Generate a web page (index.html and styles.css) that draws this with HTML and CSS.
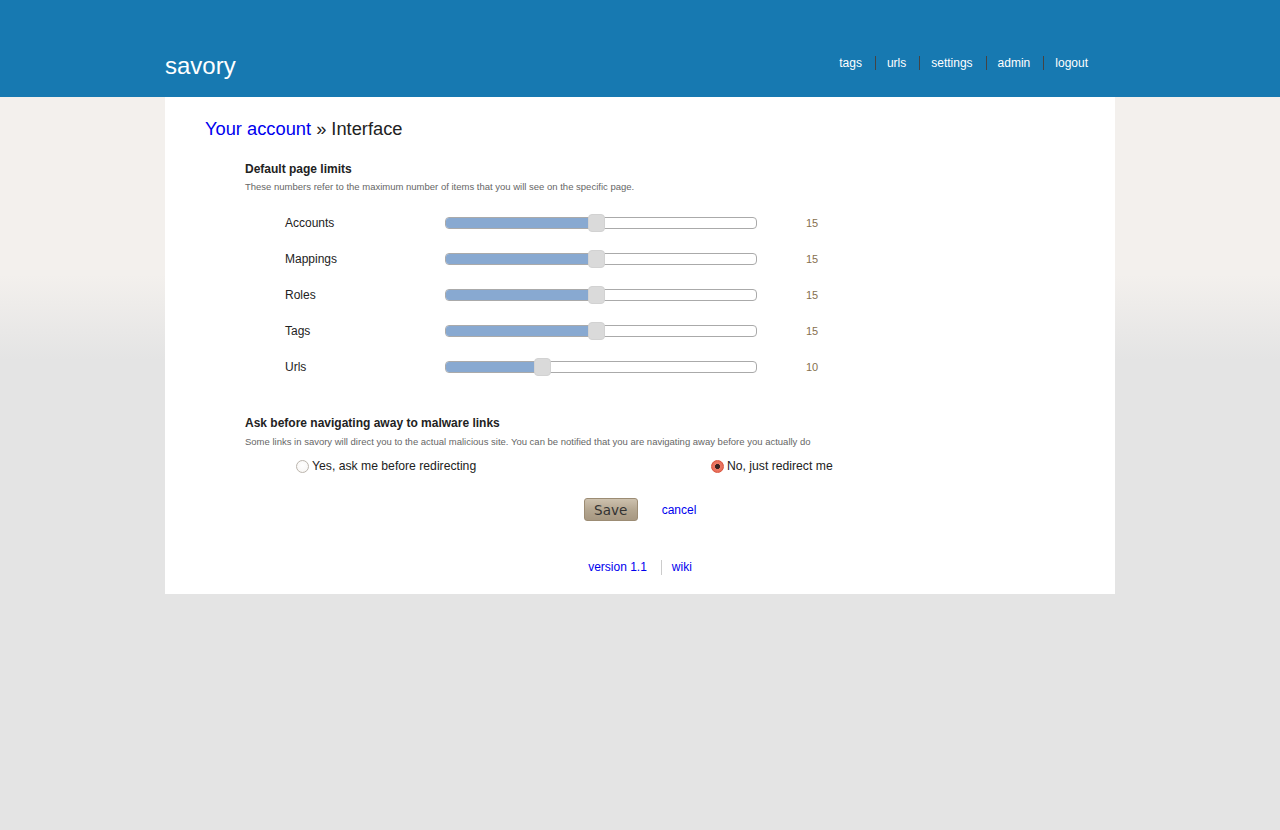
FILE: index.html
```html
<!DOCTYPE html>
<html>
<head>
<meta charset="utf-8">
<title>savory - Interface</title>
<link rel="stylesheet" href="styles.css">
</head>
<body>
<header class="topbar">
  <div class="topbar-inner">
    <div class="logo">savory</div>
    <nav class="nav">
      <a href="#">tags</a>
      <a href="#">urls</a>
      <a href="#">settings</a>
      <a href="#">admin</a>
      <a href="#">logout</a>
    </nav>
  </div>
</header>
<main class="page">
  <h1 class="title"><a href="#">Your account</a> » Interface</h1>

  <section class="section">
    <h2 class="sec-head">Default page limits</h2>
    <p class="sec-desc">These numbers refer to the maximum number of items that you will see on the specific page.</p>
    <div class="rows">
      <div class="row">
        <span class="row-label">Accounts</span>
        <div class="slider"><div class="fill" style="width:48.28%"></div><div class="thumb" style="left:48.28%"></div></div>
        <span class="row-value">15</span>
      </div>
      <div class="row">
        <span class="row-label">Mappings</span>
        <div class="slider"><div class="fill" style="width:48.28%"></div><div class="thumb" style="left:48.28%"></div></div>
        <span class="row-value">15</span>
      </div>
      <div class="row">
        <span class="row-label">Roles</span>
        <div class="slider"><div class="fill" style="width:48.28%"></div><div class="thumb" style="left:48.28%"></div></div>
        <span class="row-value">15</span>
      </div>
      <div class="row">
        <span class="row-label">Tags</span>
        <div class="slider"><div class="fill" style="width:48.28%"></div><div class="thumb" style="left:48.28%"></div></div>
        <span class="row-value">15</span>
      </div>
      <div class="row">
        <span class="row-label">Urls</span>
        <div class="slider"><div class="fill" style="width:31.03%"></div><div class="thumb" style="left:31.03%"></div></div>
        <span class="row-value">10</span>
      </div>
    </div>
  </section>

  <section class="section section-malware">
    <h2 class="sec-head">Ask before navigating away to malware links</h2>
    <p class="sec-desc">Some links in savory will direct you to the actual malicious site. You can be notified that you are navigating away before you actually do</p>
    <div class="radios">
      <label class="radio"><span class="dot"></span>Yes, ask me before redirecting</label>
      <label class="radio"><span class="dot checked"></span>No, just redirect me</label>
    </div>
  </section>

  <div class="actions">
    <button class="save" type="button">Save</button>
    <a href="#" class="cancel">cancel</a>
  </div>

  <footer class="footer">
    <a href="#">version 1.1</a><a href="#" class="wiki">wiki</a>
  </footer>
</main>
</body>
</html>
```
FILE: styles.css
```css
html {
  background: #e4e4e4;
}
body {
  margin: 0;
  min-height: 830px;
  font-family: "Liberation Sans", Arial, sans-serif;
  color: #222;
  background: linear-gradient(to bottom, #f3f0ed 0px, #f3f0ed 275px, #e4e4e4 360px, #e4e4e4 100%);
}
a {
  color: #0000ee;
  text-decoration: none;
}
.topbar {
  background: #1779b1;
  height: 97px;
}
.topbar-inner {
  width: 950px;
  margin: 0 auto;
  display: flex;
  justify-content: space-between;
  align-items: flex-start;
}
.logo {
  margin-top: 52px;
  font-size: 24px;
  line-height: 28px;
  color: #fff;
}
.nav {
  margin-top: 56px;
  margin-right: 14px;
  display: flex;
}
.nav a {
  color: #fff;
  font-size: 12px;
  line-height: 14px;
  padding: 0 13px 0 11px;
  border-left: 1px solid #444;
}
.nav a:first-child {
  border-left: none;
}
.page {
  width: 950px;
  margin: 0 auto;
  background: #fff;
  box-sizing: border-box;
  padding: 21px 40px 19px;
}
.title {
  margin: 0;
  font-size: 18.3px;
  line-height: 22px;
  font-weight: normal;
  color: #222;
}
.section {
  margin: 22px 0 0 40px;
}
.section-malware {
  margin-top: 31px;
}
.section-malware .sec-desc {
  margin-top: 6px;
}
.sec-head {
  margin: 0 0 5px;
  font-size: 12px;
  line-height: 14px;
  font-weight: bold;
  color: #222;
}
.sec-desc {
  margin: 0;
  font-size: 9.5px;
  line-height: 12px;
  color: #666;
}
.rows {
  margin: 12px 0 0 40px;
}
.row {
  display: flex;
  align-items: center;
  height: 36px;
}
.row-label {
  width: 160px;
  font-size: 12px;
}
.slider {
  position: relative;
  width: 312px;
  height: 12px;
  box-sizing: border-box;
  border: 1px solid #aaa;
  border-radius: 4px;
  background: #fff;
}
.fill {
  height: 100%;
  background: #88a9d1;
  border-radius: 3px 0 0 3px;
}
.thumb {
  position: absolute;
  top: -4px;
  width: 17px;
  height: 18px;
  margin-left: -8px;
  box-sizing: border-box;
  background: #dadada;
  border: 1px solid #d2d2d2;
  border-radius: 4px;
}
.row-value {
  margin-left: 49px;
  font-size: 11px;
  color: #86704f;
}
.radios {
  display: grid;
  grid-template-columns: 415px 415px;
  margin: 6px 0 0 51px;
  height: 24px;
  align-items: center;
}
.radio {
  display: flex;
  align-items: center;
  font-size: 12.2px;
  color: #222;
}
.dot {
  width: 13px;
  height: 13px;
  box-sizing: border-box;
  border-radius: 50%;
  border: 1px solid #bbb5ad;
  background: radial-gradient(circle at 50% 40%, #fff 0%, #f6f4f2 100%);
  margin-right: 3px;
}
.dot.checked {
  border-color: #d9553e;
  background: radial-gradient(circle, #3a2220 0px, #3a2220 2.2px, #ea7a66 2.8px, #e8604c 100%);
}
.actions {
  margin-top: 20px;
  display: flex;
  justify-content: center;
  align-items: center;
  gap: 24px;
}
.save {
  width: 54px;
  height: 23px;
  padding: 0;
  font-family: "DejaVu Sans", sans-serif;
  font-size: 13.5px;
  color: #333;
  border: 1px solid #9c8c74;
  border-radius: 3px;
  background: linear-gradient(to bottom, #cdc1ae 0%, #b3a58f 55%, #a79882 100%);
}
.cancel {
  font-size: 12px;
  margin-top: 1px;
}
.footer {
  margin-top: 39px;
  display: flex;
  justify-content: center;
  font-size: 12px;
  line-height: 15px;
}
.footer a {
  padding: 0 14px 0 0;
}
.footer .wiki {
  padding: 0 0 0 10px;
  border-left: 1px solid #ccc;
}
```
